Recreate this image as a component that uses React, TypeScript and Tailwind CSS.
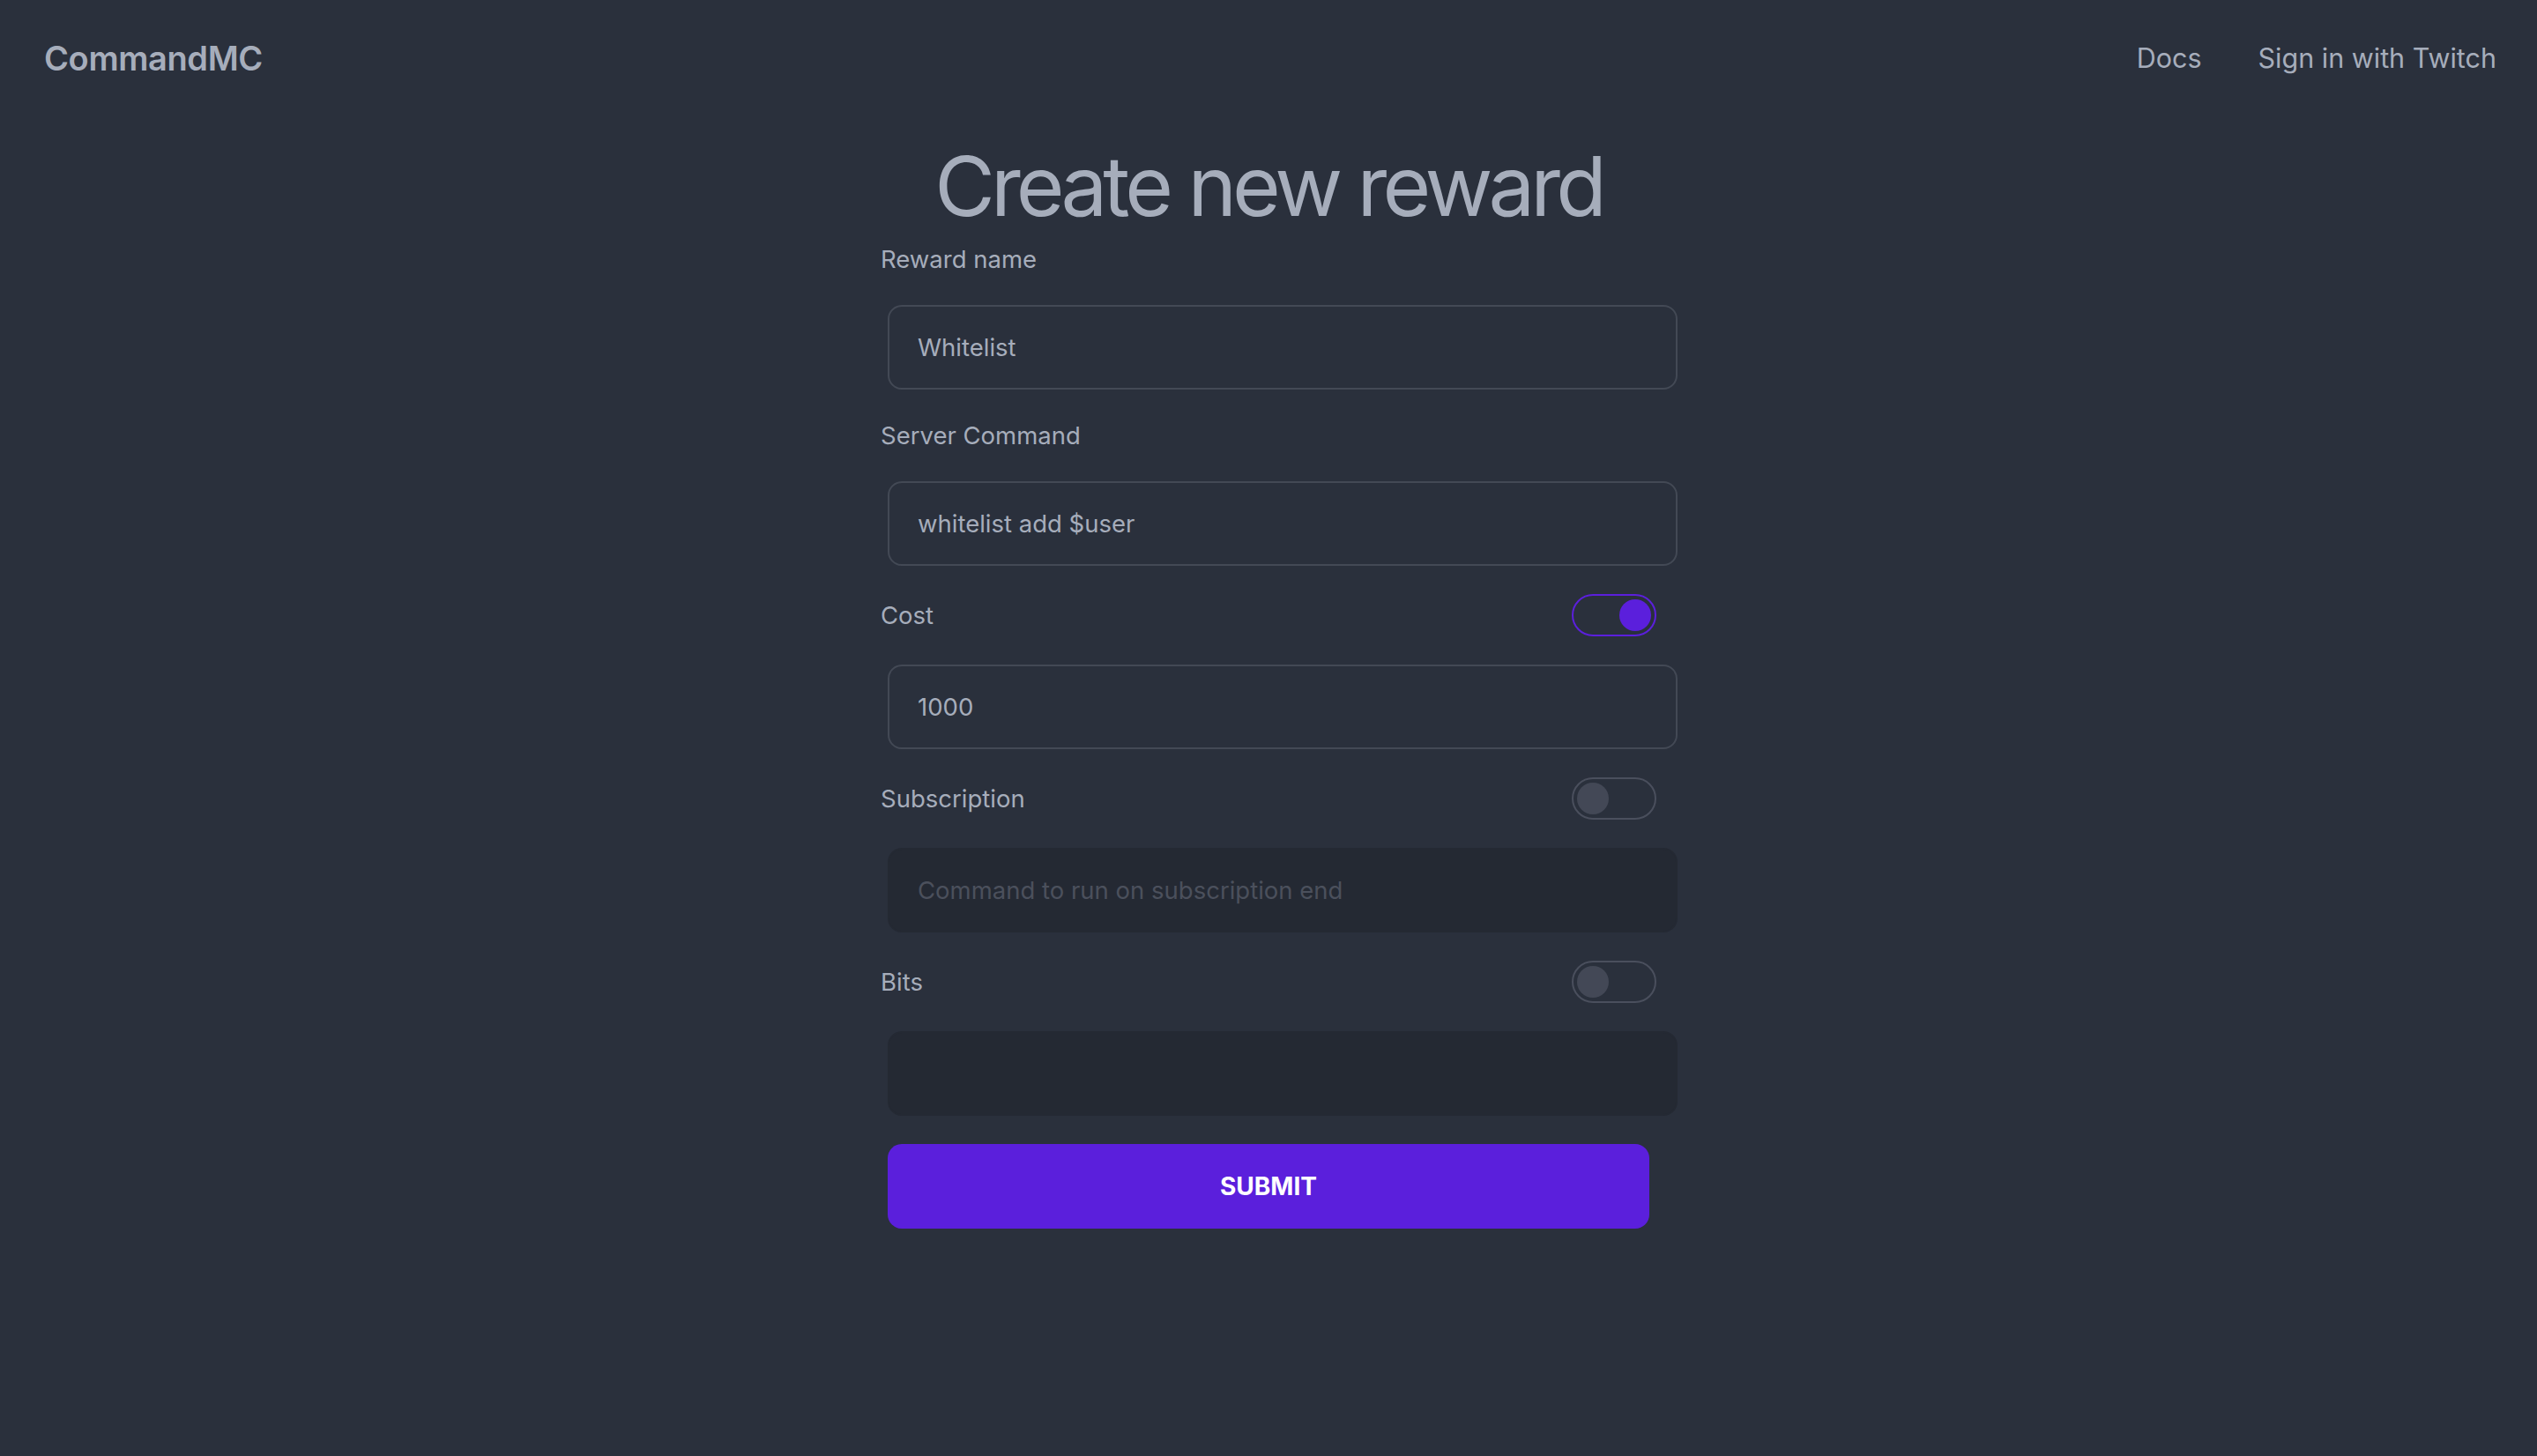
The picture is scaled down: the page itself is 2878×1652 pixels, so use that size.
import React from "react";

function Toggle({ on }: { on?: boolean }) {
  return (
    <span
      className={
        on
          ? "flex h-[48px] w-[96px] items-center justify-end rounded-full border-2 border-[#5b1fdc] p-[4px]"
          : "flex h-[48px] w-[96px] items-center justify-start rounded-full border-2 border-[#4a4f5d] p-[4px]"
      }
    >
      <span
        className={
          on
            ? "h-[36px] w-[36px] rounded-full bg-[#5b1fdc]"
            : "h-[36px] w-[36px] rounded-full bg-[#434856]"
        }
      />
    </span>
  );
}

function Label({ text, toggle }: { text: string; toggle?: "on" | "off" }) {
  return (
    <label className="flex items-center justify-between px-[8px] py-[16px]">
      <span className="text-[27.5px] leading-[40px]">{text}</span>
      {toggle && <Toggle on={toggle === "on"} />}
    </label>
  );
}

export default function App() {
  const inputCls =
    "m-[16px] block h-[96px] w-[896px] shrink-0 rounded-[16px] border-2 border-[#434955] bg-transparent px-[32px] text-[27.5px] text-[#a6adbb] outline-none";
  const disabledCls =
    "m-[16px] block h-[96px] w-[896px] shrink-0 rounded-[16px] border-2 border-[#242933] bg-[#242933] px-[32px] text-[27.5px] text-[#4b505c] placeholder:text-[#4b505c] outline-none";

  return (
    <div className="min-h-screen bg-[#2a303c] font-['Inter',sans-serif] text-[#a6adbb]">
      {/* Navbar */}
      <nav className="flex h-[132px] items-center justify-between pl-[50px] pr-[46px]">
        <a href="#" className="text-[38px] font-semibold tracking-[-0.01em]">
          CommandMC
        </a>
        <div className="flex items-center gap-[64px] text-[30.5px]">
          <a href="#">Docs</a>
          <a href="#">Sign in with Twitch</a>
        </div>
      </nav>

      <main className="flex flex-col items-center pb-[200px]">
        <h1 className="mt-[32px] text-[94px] font-normal leading-none tracking-[-0.053em]">
          Create new reward
        </h1>

        <form className="flex w-[896px] flex-col" onSubmit={(e) => e.preventDefault()}>
          <Label text="Reward name" />
          <input className={inputCls} defaultValue="Whitelist" />

          <Label text="Server Command" />
          <input className={inputCls} defaultValue="whitelist add $user" />

          <Label text="Cost" toggle="on" />
          <input className={inputCls} defaultValue="1000" />

          <Label text="Subscription" toggle="off" />
          <input
            className={disabledCls}
            disabled
            placeholder="Command to run on subscription end"
          />

          <Label text="Bits" toggle="off" />
          <input className={disabledCls} disabled />

          <button
            type="submit"
            className="m-[16px] h-[96px] rounded-[16px] bg-[#5b1fdc] text-[28px] font-bold uppercase text-white"
          >
            Submit
          </button>
        </form>
      </main>
    </div>
  );
}
